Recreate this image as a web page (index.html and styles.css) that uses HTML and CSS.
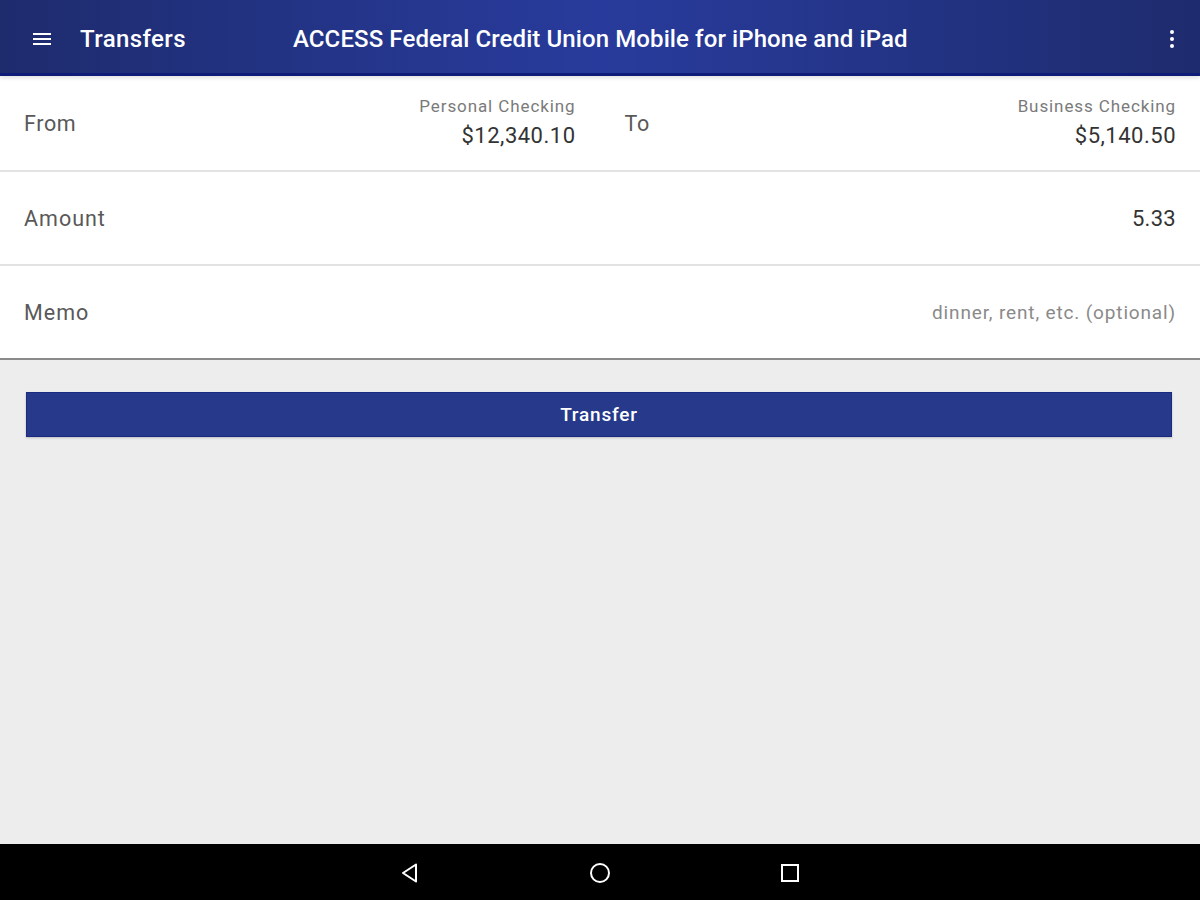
FILE: index.html
```html
<!DOCTYPE html>
<html>
<head>
<meta charset="utf-8">
<link rel="stylesheet" href="styles.css">
</head>
<body>
<div class="app">
  <header class="appbar">
    <svg class="menu-icon" width="24" height="24" viewBox="0 0 24 24"><path d="M3 6h18v2H3zM3 11h18v2H3zM3 16h18v2H3z" fill="#fff"/></svg>
    <div class="section-title">Transfers</div>
    <div class="app-title">ACCESS Federal Credit Union Mobile for iPhone and iPad</div>
    <svg class="more-icon" width="24" height="24" viewBox="0 0 24 24"><circle cx="12" cy="5" r="2" fill="#fff"/><circle cx="12" cy="12" r="2" fill="#fff"/><circle cx="12" cy="19" r="2" fill="#fff"/></svg>
  </header>
  <main class="content">
    <section class="form">
      <div class="row split">
        <div class="half">
          <span class="label">From</span>
          <div class="account">
            <span class="acct-name">Personal Checking</span>
            <span class="acct-bal">$12,340.10</span>
          </div>
        </div>
        <div class="half">
          <span class="label">To</span>
          <div class="account">
            <span class="acct-name">Business Checking</span>
            <span class="acct-bal">$5,140.50</span>
          </div>
        </div>
      </div>
      <div class="row">
        <span class="label">Amount</span>
        <span class="value">5.33</span>
      </div>
      <div class="row last">
        <span class="label">Memo</span>
        <span class="placeholder">dinner, rent, etc. (optional)</span>
      </div>
    </section>
    <div class="actions">
      <button class="transfer-btn">Transfer</button>
    </div>
  </main>
  <nav class="navbar">
    <svg width="24" height="24" viewBox="0 0 24 24"><path d="M18 3.5 L5 12 L18 20.5 Z" fill="none" stroke="#fff" stroke-width="2" stroke-linejoin="round"/></svg>
    <svg width="24" height="24" viewBox="0 0 24 24"><circle cx="12" cy="12" r="9" fill="none" stroke="#fff" stroke-width="2"/></svg>
    <svg width="24" height="24" viewBox="0 0 24 24"><rect x="4" y="4" width="16" height="16" fill="none" stroke="#fff" stroke-width="2"/></svg>
  </nav>
</div>
</body>
</html>
```
FILE: styles.css
```css
* { box-sizing: border-box; }
html, body { margin: 0; padding: 0; }
body {
  font-family: Roboto, "Noto Sans", "Liberation Sans", sans-serif;
  background: #ededed;
}
.app {
  width: 1200px;
  height: 900px;
  display: flex;
  flex-direction: column;
  background: #ededed;
}
.appbar {
  height: 76px;
  flex: none;
  display: flex;
  align-items: center;
  background: linear-gradient(to right, #1e2b6d 0%, #24358a 30%, #283b9c 50%, #24358a 70%, #1e2b6d 100%);
  border-bottom: 3px solid #0f1c78;
  box-shadow: 0 2px 4px rgba(0,0,0,0.12);
  color: #fff;
  padding: 5px 16px 0 30px;
  position: relative;
  z-index: 1;
}
.menu-icon { flex: none; }
.section-title {
  font-size: 24px;
  font-weight: 500;
  letter-spacing: 0.4px;
  margin-left: 26px;
  width: 213px;
}
.app-title {
  font-size: 24px;
  font-weight: 500;
  letter-spacing: 0.1px;
  flex: 1;
}
.more-icon { flex: none; }
.content {
  flex: 1;
  display: flex;
  flex-direction: column;
}
.form {
  background: #fff;
  border-bottom: 2px solid #8a8a8a;
}
.row {
  height: 94px;
  display: flex;
  align-items: center;
  justify-content: space-between;
  padding: 0 24px;
  border-bottom: 2px solid #e2e2e2;
}
.row.split { padding: 0; height: 96px; }
.row.last { border-bottom: none; height: 92px; }
.half {
  flex: 1;
  height: 100%;
  display: flex;
  align-items: center;
  justify-content: space-between;
  padding: 0 24px;
}
.half + .half { padding-left: 25px; }
.label {
  font-size: 21.5px;
  letter-spacing: 1px;
  color: #595959;
}
.half .label { letter-spacing: 0.6px; }
.account {
  display: flex;
  flex-direction: column;
  align-items: flex-end;
}
.acct-name {
  font-size: 17px;
  letter-spacing: 0.9px;
  color: #7a7a7a;
  line-height: 26px;
}
.acct-bal {
  font-size: 22px;
  letter-spacing: 0.5px;
  color: #333;
  line-height: 34px;
}
.value {
  font-size: 22px;
  letter-spacing: 0.3px;
  color: #333;
}
.placeholder {
  font-size: 19px;
  letter-spacing: 0.85px;
  color: #8a8a8a;
}
.actions {
  padding: 32px 28px 0 26px;
}
.transfer-btn {
  width: 100%;
  height: 45px;
  background: #27398b;
  border: 1px solid #1a2a80;
  color: #fff;
  font-family: Roboto, "Noto Sans", sans-serif;
  font-size: 19px;
  font-weight: 500;
  letter-spacing: 0.8px;
  box-shadow: 0 1px 2px rgba(0,0,0,0.2);
  cursor: pointer;
}
.navbar {
  height: 56px;
  flex: none;
  background: #000;
  display: flex;
  align-items: center;
  justify-content: center;
  gap: 166px;
  padding-top: 2px;
}
```
